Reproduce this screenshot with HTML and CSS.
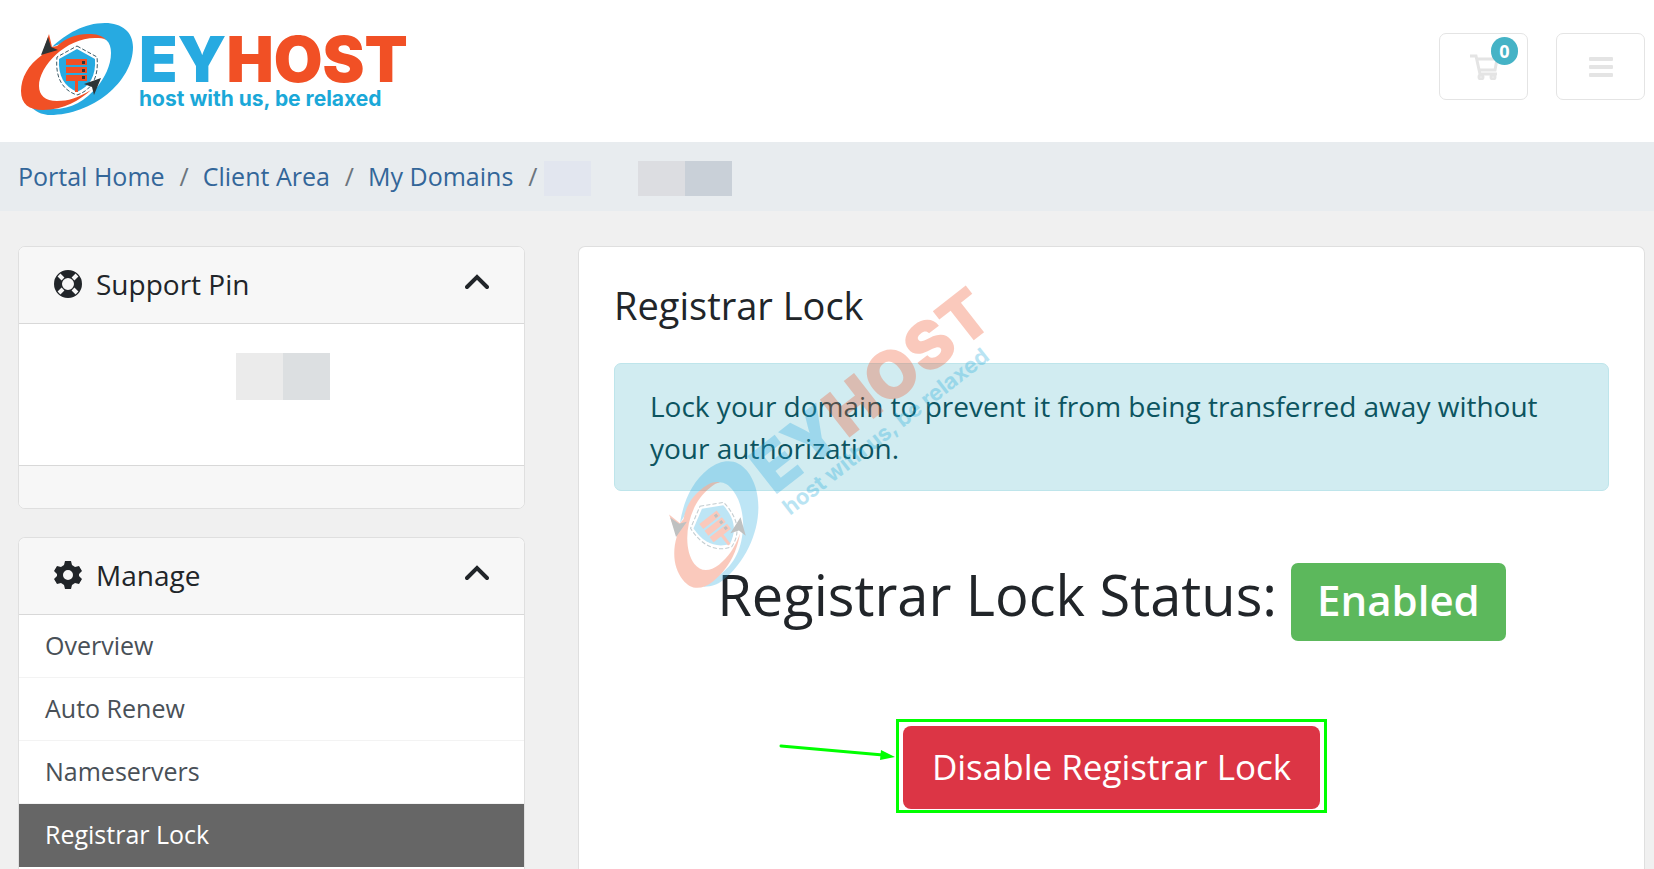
FILE: index.html
```html
<!DOCTYPE html>
<html lang="en">
<head>
    <meta charset="UTF-8">
    <meta name="viewport" content="width=device-width, initial-scale=1.0">
    <title>Registrar Lock - EYHOST</title>
    <link rel="stylesheet" href="styles.css">
</head>
<body>
    <!-- Header -->
    <header class="header">
        <a href="#" class="logo" aria-label="EYHOST">
            <svg viewBox="18 20 412 98" width="412" height="98">
                <g id="logoArt">
                    <path fill="#27aae1" d="M32 108C38 113 44 115 50 115C92 115 133 82 133 47C133 32 122 23 105 23C84 23 66 34 52 47L60 44C70 38 82 36 92 36C106 36 111 42 111 53C111 66 104 78 98 86C84 102 70 110 50 109z"/>
                    <path fill="#f15025" d="M49 34L42 55C28 65 21 78 21 91C21 104 29 110 43 110C64 110 80 100 91 90C78 98 68 101 57 101C45 101 39 95 39 86C39 66 66 38 95 38C100 38 103 38 106 40C102 35 96 34 88 34C76 34 66 38 57 46L52 47z"/>
                    <path fill="#27aae1" d="M77 49L95 59C96 76 90 86 77 92C64 86 58 76 59 59z"/>
                    <path fill="none" stroke="#3b5a66" stroke-width="1" stroke-dasharray="4 2" d="M77 46L97 57C99 77 92 90 77 95C62 90 55 77 57 57z"/>
                    <path fill="#f15025" d="M66 59h21v6H66zM66 67h21v6H66zM66 75h21v6H66zM75 81h3v11h-3z"/>
                    <path fill="#2d3436" d="M82 61h3v3h-3zM82 69h3v3h-3zM82 76h3v3h-3zM48 37L41 55L58 50L51 47zM101 78L94 95L92 87L84 84z"/>
                    <text class="logo-name" x="139" y="82"><tspan class="logo-blue">EY</tspan><tspan class="logo-orange">HOST</tspan></text>
                    <text class="logo-tagline" x="139" y="106">host with us, be relaxed</text>
                </g>
            </svg>
        </a>
        <div class="header-actions">
            <button type="button" class="btn-outline" aria-label="Shopping cart">
                <svg viewBox="0 0 28 26" width="28" height="26" fill="none" stroke="#e4e4e4" stroke-width="3">
                    <path d="M0 2h6l4 18h17M7 5h20l-2 11H9"/>
                    <circle cx="11" cy="23" r="2"/>
                    <circle cx="23" cy="23" r="2"/>
                </svg>
                <span class="cart-count">0</span>
            </button>
            <button type="button" class="btn-outline" aria-label="Menu">
                <svg viewBox="0 0 24 20" width="24" height="20" fill="#e4e4e4">
                    <rect y="0" width="24" height="4" rx="1"/>
                    <rect y="8" width="24" height="4" rx="1"/>
                    <rect y="16" width="24" height="4" rx="1"/>
                </svg>
            </button>
        </div>
    </header>

    <!-- Breadcrumb -->
    <nav class="breadcrumb">
        <a href="#">Portal Home</a>
        <span class="divider">/</span>
        <a href="#">Client Area</a>
        <span class="divider">/</span>
        <a href="#">My Domains</a>
        <span class="divider divider-last">/</span>
        <span class="domain-mask"><i class="tone-1"></i><i></i><i class="tone-2"></i><i class="tone-3"></i></span>
    </nav>

    <div class="container">
        <!-- Sidebar -->
        <aside class="sidebar">
            <section class="card">
                <h2 class="card-header">
                    <svg class="card-icon" viewBox="0 0 28 28" width="28" height="28">
                        <circle cx="14" cy="14" r="10" fill="none" stroke="#212529" stroke-width="8"/>
                        <path stroke="#f7f7f7" stroke-width="4" d="M5 5l4 4M23 5l-4 4M5 23l4-4M23 23l-4-4"/>
                    </svg>
                    Support Pin
                    <svg class="chevron" viewBox="0 0 24 20" width="24" height="20"><path d="M2 13L12 3l10 10"/></svg>
                </h2>
                <div class="pin-body">
                    <span class="pin-mask"><i class="tone-4"></i><i class="tone-5"></i></span>
                </div>
                <div class="card-footer"></div>
            </section>

            <section class="card card-manage">
                <h2 class="card-header">
                    <svg class="card-icon" viewBox="0 0 28 28" width="28" height="28">
                        <path fill="#212529" fill-rule="evenodd" d="M11 0h6l1 4 3 2 4-1 3 5-3 3v2l3 3-3 5-4-1-3 2-1 4h-6l-1-4-3-2-4 1-3-5 3-3v-2l-3-3 3-5 4 1 3-2zM14 9a5 5 0 1 0 0 10a5 5 0 1 0 0-10z"/>
                    </svg>
                    Manage
                    <svg class="chevron" viewBox="0 0 24 20" width="24" height="20"><path d="M2 13L12 3l10 10"/></svg>
                </h2>
                <nav class="menu">
                    <a href="#">Overview</a>
                    <a href="#">Auto Renew</a>
                    <a href="#">Nameservers</a>
                    <a href="#" class="active">Registrar Lock</a>
                </nav>
            </section>
        </aside>

        <!-- Registrar Lock -->
        <main class="card content">
            <h1>Registrar Lock</h1>
            <div class="alert">Lock your domain to prevent it from being transferred away without your authorization.</div>
            <div class="status">
                Registrar Lock Status: <span class="label-success">Enabled</span>
            </div>
            <div class="actions">
                <div class="highlight">
                    <svg class="arrow" viewBox="0 0 116 20" width="116" height="20">
                        <path stroke="#00ff00" stroke-width="3" stroke-linecap="round" d="M2 4l102 9"/>
                        <path fill="#00ff00" d="M102 8l14 7-15 3z"/>
                    </svg>
                    <button type="button" class="btn-danger">Disable Registrar Lock</button>
                </div>
            </div>
            <svg class="watermark" viewBox="0 0 480 380" width="480" height="380" aria-hidden="true">
                <use href="#logoArt" transform="translate(274 189) rotate(-38) scale(1.05) translate(-233 -83)"/>
            </svg>
        </main>
    </div>
</body>
</html>
```
FILE: styles.css
```css
* {
    margin: 0;
    padding: 0;
    box-sizing: border-box;
}

body {
    display: flex;
    flex-direction: column;
    height: 100vh;
    overflow: hidden;
    font-family: "Open Sans", sans-serif;
    font-size: 28px;
    line-height: 42px;
    background-color: #f0f0f0;
    color: #212529;
}

a {
    color: #336699;
    text-decoration: none;
}

/* Header */
.header {
    display: flex;
    justify-content: space-between;
    align-items: center;
    flex-shrink: 0;
    padding: 20px 9px 24px 18px;
    background: white;
}

.logo svg {
    display: block;
}

.logo-name {
    font-family: Inter, sans-serif;
    font-size: 63px;
    font-weight: 900;
}

.logo-blue {
    fill: #27aae1;
}

.logo-orange {
    fill: #f15025;
}

.logo-tagline {
    font-family: Inter, sans-serif;
    font-size: 21px;
    font-weight: 700;
    fill: #1ba8d8;
}

.header-actions {
    display: flex;
    gap: 28px;
    padding-bottom: 5px;
}

.btn-outline {
    position: relative;
    display: flex;
    justify-content: center;
    align-items: center;
    width: 89px;
    height: 67px;
    border: 1px solid #e4e4e4;
    border-radius: 7px;
    background: white;
    cursor: pointer;
}

.cart-count {
    position: absolute;
    top: 3px;
    right: 9px;
    width: 27px;
    height: 28px;
    border-radius: 14px;
    background-color: #45b3c6;
    color: white;
    font: 700 18px/28px "Open Sans", sans-serif;
}

/* Breadcrumb */
.breadcrumb {
    display: flex;
    align-items: center;
    flex-shrink: 0;
    height: 69px;
    padding: 0 18px 2px;
    background-color: #e8ecef;
    font-size: 25px;
}

.divider {
    padding: 0 14px 0 15px;
    color: #6c757d;
}

.divider-last {
    padding-right: 7px;
}

.domain-mask, .pin-mask {
    display: flex;
}

.domain-mask {
    padding-top: 5px;
}

.domain-mask i {
    width: 47px;
    height: 35px;
}

.pin-mask i {
    width: 47px;
    height: 47px;
}

.tone-1 {
    background: #e2e6ef;
}

.tone-2 {
    background: #dcdde1;
}

.tone-3 {
    background: #c9d0d8;
}

.tone-4 {
    background: #ebebeb;
}

.tone-5 {
    background: #dcdfe1;
}

/* Layout */
.container {
    display: grid;
    grid-template-columns: 507fr 1067fr;
    gap: 53px;
    flex: 1;
    padding: 35px 9px 0 18px;
}

.card {
    border: 1px solid #dfdfdf;
    border-radius: 7px;
    background: white;
    overflow: hidden;
}

/* Sidebar */
.sidebar {
    display: flex;
    flex-direction: column;
    gap: 28px;
}

.card-header {
    display: flex;
    align-items: center;
    height: 77px;
    padding: 0 35px 2px;
    border-bottom: 1px solid #d8d8d8;
    background-color: #f7f7f7;
    font-size: 28px;
    font-weight: 400;
}

.card-icon {
    margin-right: 14px;
}

.chevron {
    margin-left: auto;
    fill: none;
    stroke: #212529;
    stroke-width: 4;
    stroke-linecap: round;
}

.pin-body {
    display: flex;
    justify-content: center;
    height: 141px;
    padding: 29px 0 0 22px;
}

.card-footer {
    height: 43px;
    border-top: 1px solid #d8d8d8;
    background-color: #f7f7f7;
}

.card-manage {
    flex: 1;
    border-bottom: 0;
    border-radius: 7px 7px 0 0;
}

.menu a {
    display: block;
    padding: 9px 26px 11px;
    border-bottom: 1px solid #f3f3f3;
    color: #495057;
    font-size: 25px;
}

.menu .active {
    border-color: #666;
    background-color: #666;
    color: white;
}

/* Content */
.content {
    position: relative;
    padding: 34px 35px 0;
    border-bottom: 0;
    border-radius: 7px 7px 0 0;
}

h1 {
    margin-bottom: 34px;
    font-size: 38px;
    font-weight: 400;
    line-height: 48px;
}

.alert {
    padding: 21px 35px;
    border: 1px solid #bee5eb;
    border-radius: 7px;
    background-color: #d1ecf1;
    color: #0c5460;
}

.status {
    display: flex;
    justify-content: center;
    align-items: baseline;
    gap: 14px;
    margin-top: 69px;
    font-size: 56px;
    line-height: 68px;
}

.label-success {
    padding: 3px 26px 7px;
    border-radius: 7px;
    background-color: #5cb85c;
    color: white;
    font-size: 42px;
    font-weight: 600;
}

.actions {
    display: flex;
    justify-content: center;
    margin-top: 78px;
}

/* Green frame around the lock button */
.highlight {
    position: relative;
    padding: 4px 4px 1px;
    border: 3px solid #00ff00;
}

.arrow {
    position: absolute;
    top: 20px;
    right: 100%;
    margin-right: 4px;
}

.btn-danger {
    display: block;
    padding: 14px 29px 16px;
    border: 0;
    border-radius: 8px;
    background-color: #dc3545;
    color: white;
    font-family: inherit;
    font-size: 35px;
    line-height: 53px;
    cursor: pointer;
}

.watermark {
    position: absolute;
    top: 0;
    left: 0;
    opacity: 0.3;
    pointer-events: none;
}
```
